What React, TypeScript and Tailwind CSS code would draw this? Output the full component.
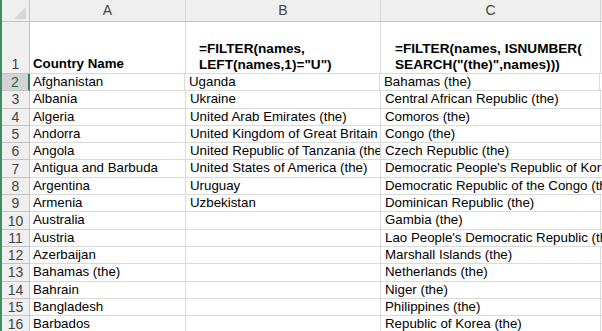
import React from 'react';

const rows: [string, string, string, boolean?][] = [
  ['Afghanistan', 'Uganda', 'Bahamas (the)'],
  ['Albania', 'Ukraine', 'Central African Republic (the)'],
  ['Algeria', 'United Arab Emirates (the)', 'Comoros (the)'],
  ['Andorra', 'United Kingdom of Great Britain and Northern Ireland (the)', 'Congo (the)'],
  ['Angola', 'United Republic of Tanzania (the)', 'Czech Republic (the)'],
  ['Antigua and Barbuda', 'United States of America (the)', "Democratic People's Republic of Korea (the)", true],
  ['Argentina', 'Uruguay', 'Democratic Republic of the Congo (the)', true],
  ['Armenia', 'Uzbekistan', 'Dominican Republic (the)'],
  ['Australia', '', 'Gambia (the)'],
  ['Austria', '', "Lao People's Democratic Republic (the)", true],
  ['Azerbaijan', '', 'Marshall Islands (the)'],
  ['Bahamas (the)', '', 'Netherlands (the)'],
  ['Bahrain', '', 'Niger (the)'],
  ['Bangladesh', '', 'Philippines (the)'],
  ['Barbados', '', 'Republic of Korea (the)'],
  ['Belarus', '', 'Republic of Moldova (the)'],
];

const cell = 'shrink-0 border-r border-b border-[#dadada] overflow-hidden whitespace-nowrap';

export default function App() {
  return (
    <div className="w-[602px] h-[331px] overflow-hidden bg-white border-l-2 border-[#3f8c60] font-['Liberation_Sans',Arial,sans-serif] text-[13.3px] text-black">
      {/* column headers */}
      <div className="flex h-[22px] bg-[#efefef] border-b border-[#c4c4c4] text-[14px] text-[#444]">
        <div className="relative w-[28px] shrink-0 border-r border-[#c4c4c4]">
          <div className="absolute right-[3px] bottom-[2px] w-0 h-0 border-l-[12px] border-l-transparent border-b-[12px] border-b-[#d6d6d6]" />
        </div>
        <div className="w-[156px] shrink-0 border-r border-[#d4d4d4] flex items-center justify-center">A</div>
        <div className="w-[195px] shrink-0 border-r border-[#d4d4d4] flex items-center justify-center">B</div>
        <div className="w-[220px] shrink-0 border-r border-[#d4d4d4] flex items-center justify-center">C</div>
        <div className="flex-1" />
      </div>

      {/* row 1 */}
      <div className="flex h-[52px] font-bold leading-[16px]">
        <div className="w-[28px] shrink-0 bg-[#efefef] border-r border-b border-[#c4c4c4] flex items-end justify-center pb-[1px] font-normal text-[14px] text-[#444]">1</div>
        <div className={`${cell} w-[156px] flex items-end pl-[3px] pb-[1px]`}>Country Name</div>
        <div className={`${cell} w-[195px] flex items-end pl-[13px] pb-0 whitespace-normal text-[13.6px]`}>
          <div>=FILTER(names,<br />LEFT(names,1)="U")</div>
        </div>
        <div className={`${cell} w-[220px] flex items-end pl-[14px] pb-0 whitespace-normal text-[13.6px]`}>
          <div>=FILTER(names, ISNUMBER(<br />SEARCH("(the)",names)))</div>
        </div>
        <div className="flex-1 border-b border-[#dadada]" />
      </div>

      {rows.map(([a, b, c, long], i) => {
        const active = i === 0;
        return (
          <div key={i} className="flex h-[17.3px] leading-[16px]">
            <div
              className={`w-[28px] shrink-0 border-b flex items-center justify-center text-[14px] ${
                active
                  ? 'bg-[#d3d3d3] text-[#1e6b41] border-r-2 border-r-[#2f7d52] border-b-[#c4c4c4]'
                  : 'bg-[#efefef] text-[#444] border-r border-[#c4c4c4]'
              }`}
            >
              {i + 2}
            </div>
            <div className={`${cell} pl-[3px] ${active ? 'w-[155px]' : 'w-[156px]'}`}>{a}</div>
            <div className={`${cell} w-[195px] pl-[4px]`}>{b}</div>
            <div
              className={`shrink-0 w-[220px] pl-[4px] whitespace-nowrap border-b border-[#dadada] ${
                long ? 'overflow-visible' : 'border-r overflow-hidden'
              }`}
            >
              {c}
            </div>
            <div className="flex-1 border-b border-[#dadada]" />
          </div>
        );
      })}
    </div>
  );
}
